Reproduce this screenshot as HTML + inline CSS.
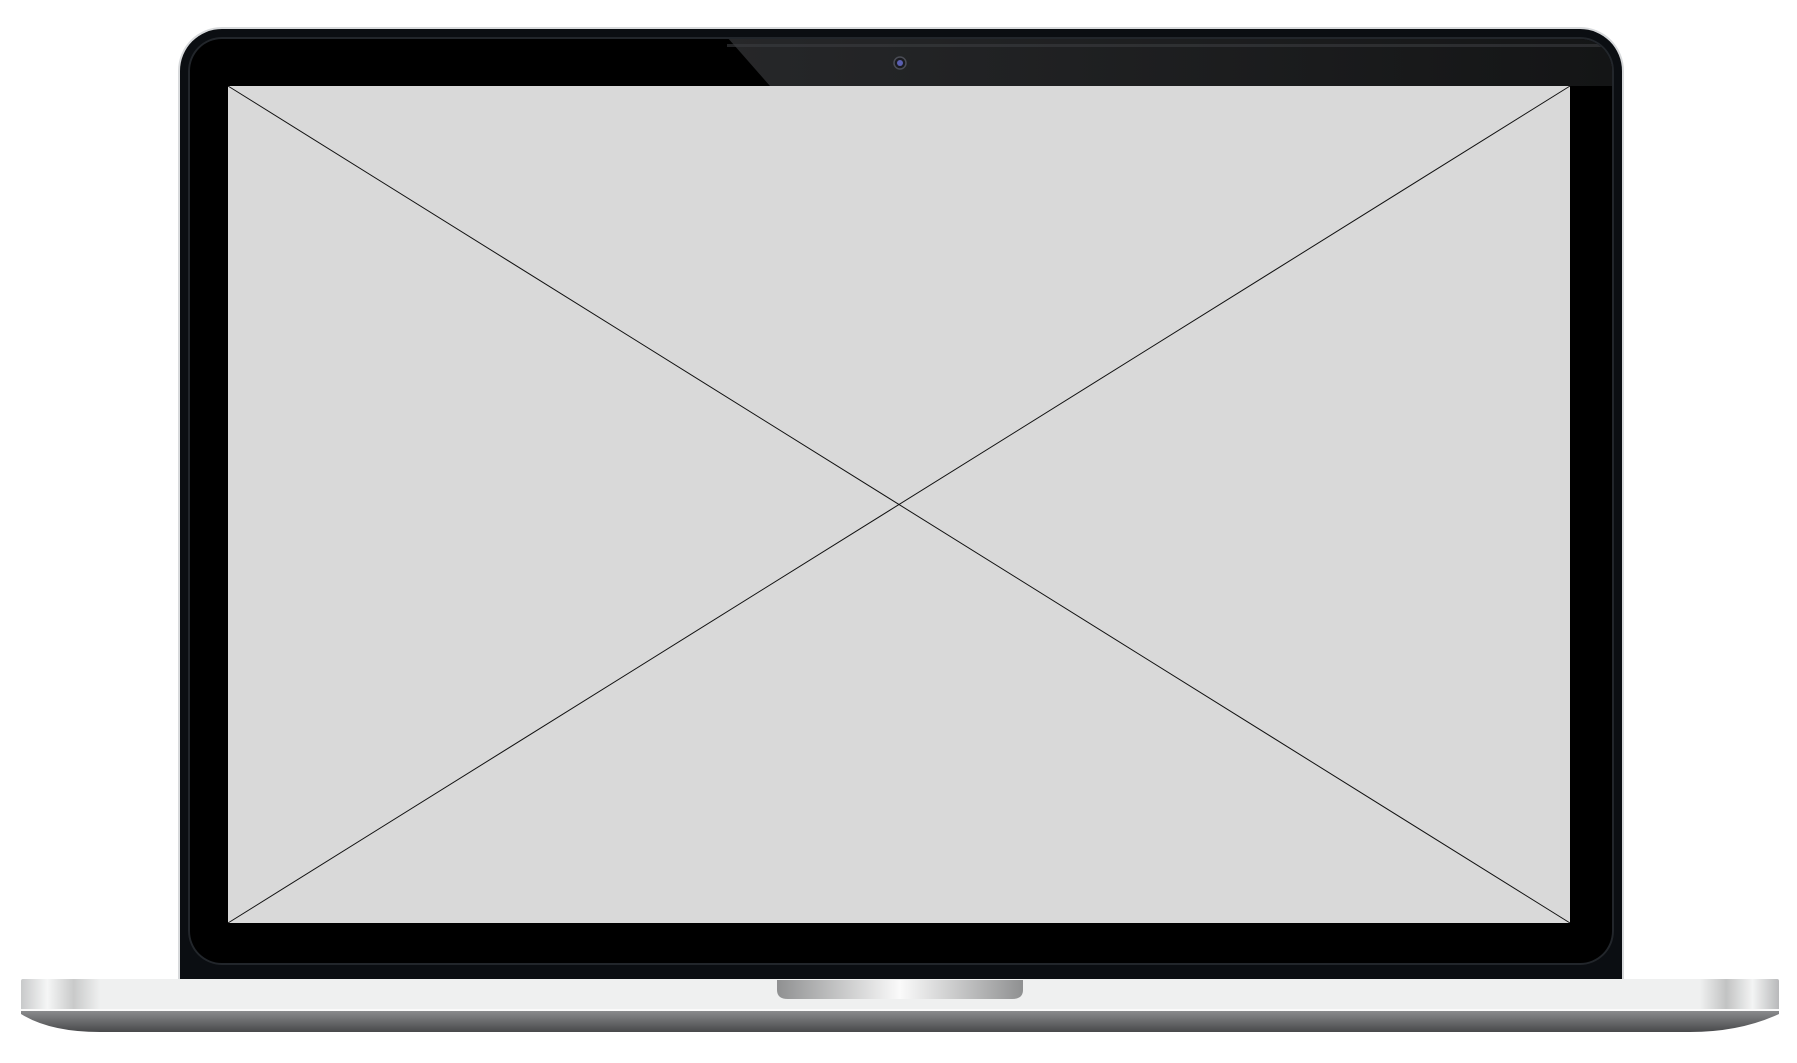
<!DOCTYPE html>
<html><head><meta charset="utf-8"><style>
html,body{margin:0;padding:0;background:#fff;width:1797px;height:1063px;overflow:hidden}
.a{position:absolute}
</style></head><body>
<div class="a" style="left:178px;top:27px;width:1446px;height:960px;border-radius:44px 44px 0 0;background:#d8dadc"></div>
<div class="a" style="left:180px;top:29px;width:1442px;height:960px;border-radius:42px 42px 0 0;background:#0b0e12"></div>
<div class="a" style="left:188px;top:37px;width:1426px;height:928px;border-radius:34px;background:#000;box-shadow:inset 0 0 0 2px #22262b"></div>
<svg class="a" style="left:0;top:0" width="1797" height="1063">
<defs><linearGradient id="cp" x1="0" x2="1"><stop offset="0" stop-color="#262729"/><stop offset="1" stop-color="#141516"/></linearGradient>
<clipPath id="bz"><rect x="190" y="39" width="1422" height="924" rx="32"/></clipPath>
<linearGradient id="bs" x1="0" x2="1">
<stop offset="0" stop-color="#c8c9ca"/><stop offset="0.015" stop-color="#f5f6f6"/><stop offset="0.03" stop-color="#c9caca"/><stop offset="0.045" stop-color="#eff0f0"/><stop offset="0.955" stop-color="#eff0f0"/><stop offset="0.97" stop-color="#c2c3c3"/><stop offset="0.985" stop-color="#f3f4f4"/><stop offset="1" stop-color="#b8b9ba"/></linearGradient>
<linearGradient id="bb" x1="0" y1="0" x2="0" y2="1"><stop offset="0" stop-color="#8a8b8d"/><stop offset="1" stop-color="#48494b"/></linearGradient>
<linearGradient id="nt" x1="0" x2="1"><stop offset="0" stop-color="#8f9091"/><stop offset="0.5" stop-color="#fafafa"/><stop offset="1" stop-color="#8f9091"/></linearGradient>
</defs>
<g clip-path="url(#bz)">
<path d="M727 37 L1614 37 L1614 86 L770 86 Z" fill="url(#cp)"/>
<rect x="727" y="44" width="887" height="3" fill="#3a3c3f" opacity="0.6"/>
</g>
<circle cx="900" cy="63" r="6" fill="#1a1b20" stroke="#4a4c55" stroke-width="1.5"/>
<circle cx="900" cy="63" r="3" fill="#5a5fb0"/>
<rect x="228" y="86" width="1342" height="837" fill="#d9d9d9"/>
<line x1="228" y1="86" x2="1570" y2="923" stroke="#111" stroke-width="1"/>
<line x1="1570" y1="86" x2="228" y2="923" stroke="#111" stroke-width="1"/>
<path d="M21 1011 L1779 1011 L1779 1014 Q1740 1032 1690 1032 L100 1032 Q50 1032 21 1014 Z" fill="url(#bb)"/>
<rect x="21" y="979" width="1758" height="32" rx="2" fill="url(#bs)"/>
<rect x="21" y="1009" width="1758" height="2" fill="#fafafa"/>
<path d="M777 980 L1023 980 L1023 990 Q1023 999 1012 999 L788 999 Q777 999 777 990 Z" fill="url(#nt)"/>
</svg>
</body></html>
